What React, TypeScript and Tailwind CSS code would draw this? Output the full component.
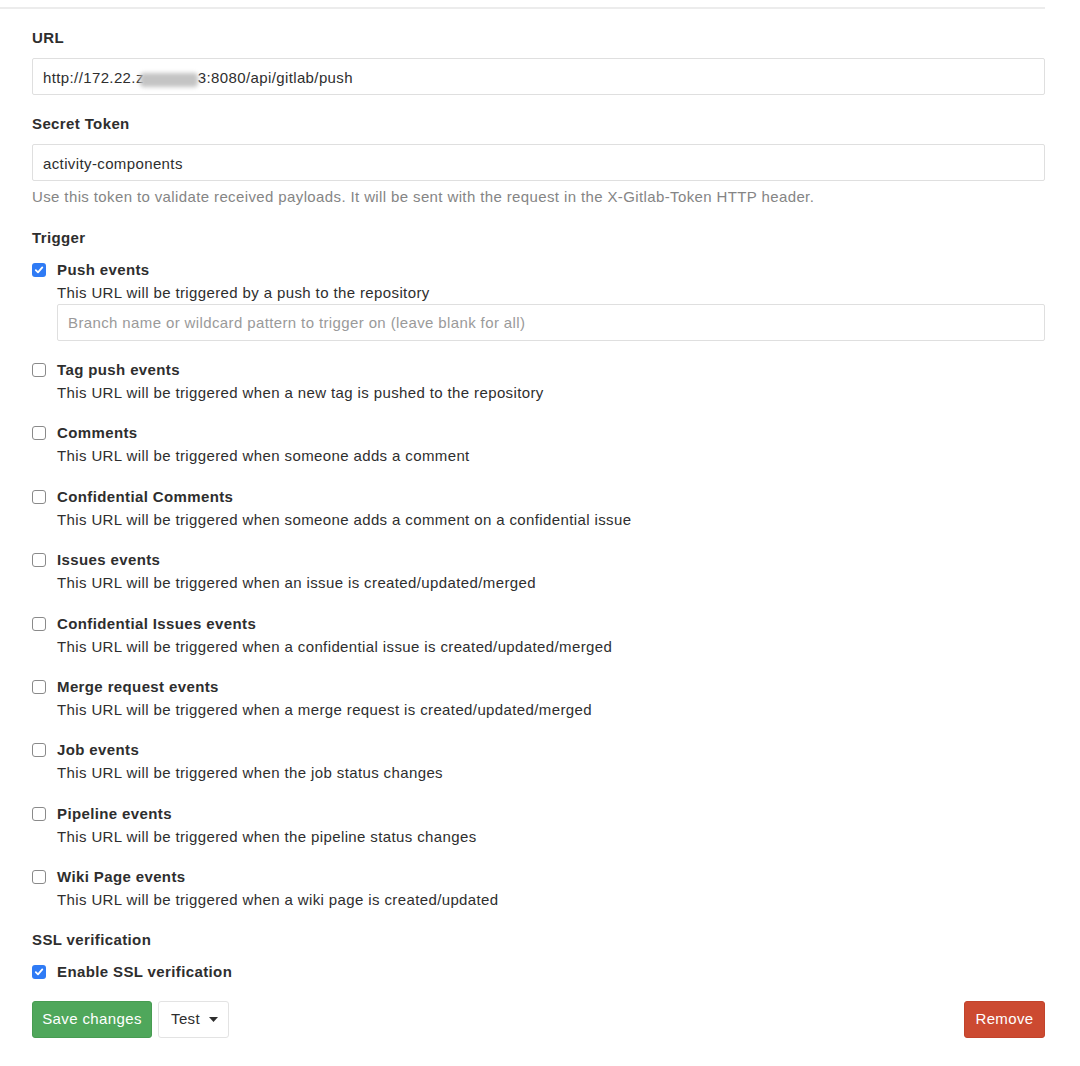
import React from "react";

const triggers = [
  { title: "Tag push events", desc: "This URL will be triggered when a new tag is pushed to the repository" },
  { title: "Comments", desc: "This URL will be triggered when someone adds a comment" },
  { title: "Confidential Comments", desc: "This URL will be triggered when someone adds a comment on a confidential issue" },
  { title: "Issues events", desc: "This URL will be triggered when an issue is created/updated/merged" },
  { title: "Confidential Issues events", desc: "This URL will be triggered when a confidential issue is created/updated/merged" },
  { title: "Merge request events", desc: "This URL will be triggered when a merge request is created/updated/merged" },
  { title: "Job events", desc: "This URL will be triggered when the job status changes" },
  { title: "Pipeline events", desc: "This URL will be triggered when the pipeline status changes" },
  { title: "Wiki Page events", desc: "This URL will be triggered when a wiki page is created/updated" },
];

function Checkbox({ checked }: { checked?: boolean }) {
  if (checked) {
    return (
      <span className="w-[14px] h-[14px] rounded-[3px] bg-[#2f7bf5] flex items-center justify-center shrink-0">
        <svg width="10" height="10" viewBox="0 0 10 10" fill="none">
          <path d="M1.8 5.2 L4 7.4 L8.3 2.4" stroke="white" strokeWidth="1.8" strokeLinecap="round" strokeLinejoin="round" />
        </svg>
      </span>
    );
  }
  return <span className="w-[14px] h-[14px] rounded-[3px] border border-[#8a8a8a] bg-white shrink-0" />;
}

function Item({ title, desc, checked, children }: { title: string; desc?: string; checked?: boolean; children?: React.ReactNode }) {
  return (
    <div className="flex">
      <div className="h-[20px] flex items-center">
        <Checkbox checked={checked} />
      </div>
      <div className="ml-[11px] flex-1">
        <div className="h-[20px] leading-[20px] font-bold">{title}</div>
        {desc && <div className="mt-[3px] h-[20px] leading-[20px]">{desc}</div>}
        {children}
      </div>
    </div>
  );
}

export default function App() {
  return (
    <div
      className="w-[1080px] h-[1066px] bg-white text-[15px] tracking-[0.38px] text-[#2e2e2e] overflow-hidden"
      style={{ fontFamily: '"Liberation Sans", Arial, sans-serif' }}
    >
      <div className="w-[1045px] h-[9px] border-b-2 border-[#ececec]" />
      <div className="pl-[32px] w-[1045px]">
        <div className="mt-[19px] h-[20px] leading-[20px] font-bold">URL</div>
        <div className="mt-[10px] h-[37px] border border-[#dfdfdf] rounded-[2px] px-[10px] pt-[3px] flex items-center">
          <span>http://172.22.z</span>
          <span className="inline-block w-[58px] h-[14px] mt-[4px] -ml-[4px] bg-[#c4c4c4] blur-[2px] rounded-[4px]" />
          <span>3:8080/api/gitlab/push</span>
        </div>

        <div className="mt-[19px] h-[20px] leading-[20px] font-bold">Secret Token</div>
        <div className="mt-[10px] h-[37px] border border-[#dfdfdf] rounded-[2px] px-[10px] pt-[3px] flex items-center">
          activity-components
        </div>
        <div className="mt-[6px] h-[20px] leading-[20px] text-[#858585]">
          Use this token to validate received payloads. It will be sent with the request in the X-Gitlab-Token HTTP header.
        </div>

        <div className="mt-[21px] h-[20px] leading-[20px] font-bold">Trigger</div>

        <div className="mt-[12px]">
          <Item title="Push events" desc="This URL will be triggered by a push to the repository" checked>
            <div className="mt-[1px] h-[37px] border border-[#dfdfdf] rounded-[2px] px-[10px] pt-[2px] flex items-center text-[#9a9a9a]">
              Branch name or wildcard pattern to trigger on (leave blank for all)
            </div>
          </Item>
        </div>

        <div className="mt-[19px] flex flex-col gap-[20.4px]">
          {triggers.map((t) => (
            <Item key={t.title} title={t.title} desc={t.desc} />
          ))}
        </div>

        <div className="mt-[20px] h-[20px] leading-[20px] font-bold">SSL verification</div>
        <div className="mt-[12px]">
          <Item title="Enable SSL verification" checked />
        </div>

        <div className="mt-[19px] flex items-center">
          <button className="h-[37px] w-[120px] rounded-[3px] bg-[#4fa75b] border border-[#479c52] text-white">
            Save changes
          </button>
          <button className="ml-[6px] h-[37px] w-[71px] pl-[12px] rounded-[3px] bg-white border border-[#e3e3e3] flex items-center gap-[9px]">
            Test
            <svg width="9" height="5" viewBox="0 0 9 5">
              <path d="M0 0 L9 0 L4.5 5 Z" fill="#2e2e2e" />
            </svg>
          </button>
          <button className="ml-auto h-[37px] w-[81px] rounded-[3px] bg-[#cc4a31] border border-[#c2432b] text-white">
            Remove
          </button>
        </div>
      </div>
    </div>
  );
}
